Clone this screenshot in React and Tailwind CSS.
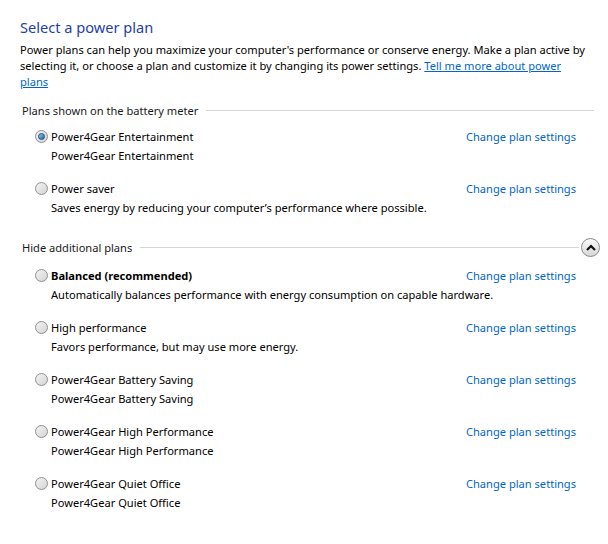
import React from 'react';

const plansShown = [
  { name: 'Power4Gear Entertainment', desc: 'Power4Gear Entertainment', selected: true },
  { name: 'Power saver', desc: 'Saves energy by reducing your computer\u2019s performance where possible.' },
];

const hiddenPlans = [
  { name: 'Balanced (recommended)', desc: 'Automatically balances performance with energy consumption on capable hardware.', bold: true },
  { name: 'High performance', desc: 'Favors performance, but may use more energy.' },
  { name: 'Power4Gear Battery Saving', desc: 'Power4Gear Battery Saving' },
  { name: 'Power4Gear High Performance', desc: 'Power4Gear High Performance' },
  { name: 'Power4Gear Quiet Office', desc: 'Power4Gear Quiet Office' },
];

function Radio({ checked }) {
  return (
    <span className="relative mt-[3px] flex h-[13px] w-[13px] shrink-0 items-center justify-center rounded-full border border-[#8f8f8f] bg-gradient-to-br from-[#f4f4f4] to-[#d4d4d4]">
      {checked && (
        <span className="h-[7px] w-[7px] rounded-full border border-[#1d4f7a] bg-gradient-to-br from-[#8ecbf2] to-[#1769a6]" />
      )}
    </span>
  );
}

function PlanRow({ plan }) {
  return (
    <div className="mb-[14px] flex">
      <div className="flex min-w-0 flex-1 pl-[35px]">
        <Radio checked={plan.selected} />
        <div className="ml-[3px]">
          <div className={`h-[19px] whitespace-nowrap leading-[19px] ${plan.bold ? 'font-bold' : ''}`}>{plan.name}</div>
          <div className="h-[19px] whitespace-nowrap leading-[19px]">{plan.desc}</div>
        </div>
      </div>
      <div className="w-[142px] shrink-0 whitespace-nowrap leading-[19px] text-[#0066cc]">Change plan settings</div>
    </div>
  );
}

export default function App() {
  return (
    <div
      className="h-[544px] w-[608px] overflow-hidden bg-white text-[11.1px] text-black"
      style={{ fontFamily: '"Noto Sans", "Open Sans", sans-serif' }}
    >
      <div className="pt-[16px]">
        <h1 className="pl-[20px] text-[14.6px] leading-[22px] text-[#1f3fae]">Select a power plan</h1>
        <p className="mt-[4px] pl-[20px] pr-[20px] leading-[16px]">
          Power plans can help you maximize your computer's performance or conserve energy. Make a plan active by
          selecting it, or choose a plan and customize it by changing its power settings.{' '}
          <span className="text-[#0066cc] underline">Tell me more about power plans</span>
        </p>

        <div className="mt-[11px] flex h-[19px] items-center pl-[22px] pr-[14px]">
          <span className="leading-[19px] text-[#1a1a1a]">Plans shown on the battery meter</span>
          <div className="ml-[8px] h-px flex-1 bg-[#d5d5d5]" />
        </div>
        <div className="mt-[7px]">
          {plansShown.map((p) => (
            <PlanRow key={p.name} plan={p} />
          ))}
        </div>

        <div className="mt-[21px] flex h-[19px] items-center pl-[22px] pr-[8px]">
          <span className="leading-[19px] text-[#1a1a1a]">Hide additional plans</span>
          <div className="ml-[8px] h-px flex-1 bg-[#d5d5d5]" />
          <div className="ml-[2px] flex h-[19px] w-[19px] items-center justify-center rounded-full border border-[#8a8a8a] bg-gradient-to-b from-[#fafafa] to-[#d8d8d8]">
            <svg width="10" height="7" viewBox="0 0 10 7">
              <path d="M1 6 L5 2 L9 6" fill="none" stroke="#111" strokeWidth="2.2" />
            </svg>
          </div>
        </div>
        <div className="mt-[9px]">
          {hiddenPlans.map((p) => (
            <PlanRow key={p.name} plan={p} />
          ))}
        </div>
      </div>
    </div>
  );
}
